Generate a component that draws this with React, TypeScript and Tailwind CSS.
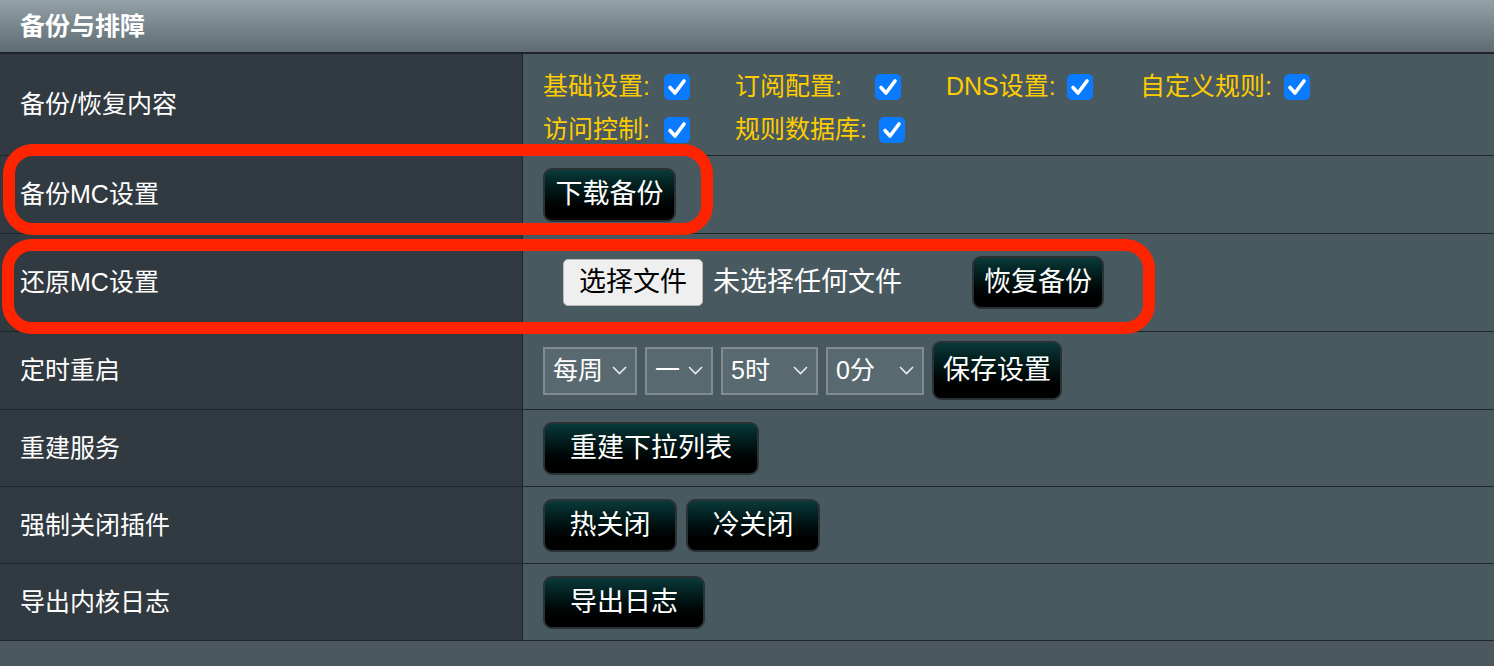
import type { ReactNode } from "react";

const FONT = "font-['Liberation_Sans','Noto_Sans_CJK_SC',sans-serif]";

function Row({ label, h, children, top }: { label: string; h: string; children: ReactNode; top?: boolean }) {
  return (
    <div className={`flex border-b border-[#1f2528] ${h}`}>
      <div className="w-[523px] shrink-0 flex items-center pl-5 bg-[#323a41] border-r border-[#1f2528] text-white text-[25px] leading-none">
        {label}
      </div>
      <div className={`flex-1 bg-[#48595f] pl-5 flex ${top ? "flex-col pt-[11px]" : "items-center"}`}>{children}</div>
    </div>
  );
}

function Btn({ children, w, h = "h-[53px]" }: { children: ReactNode; w: string; h?: string }) {
  return (
    <button className={`${w} ${h} shrink-0 rounded-[9px] border-2 border-[#2a3235] bg-linear-to-b from-[#0a3a3a] to-black text-white text-[27px] leading-none flex items-center justify-center`}>
      {children}
    </button>
  );
}

function Check() {
  return (
    <span className="w-[26px] h-[26px] shrink-0 rounded-[5px] bg-[#0a7bff] flex items-center justify-center">
      <svg width="20" height="18" viewBox="0 0 20 18" fill="none">
        <path d="M3 9.5 L8 15 L17 3" stroke="white" strokeWidth="3.6" strokeLinecap="round" strokeLinejoin="round" />
      </svg>
    </span>
  );
}

function Opt({ label, w, gap }: { label: string; w: string; gap: string }) {
  return (
    <div className={`flex items-center ${gap}`}>
      <span className={`${w} text-[#ffcc00] text-[25px] leading-none`}>{label}</span>
      <Check />
    </div>
  );
}

function Select({ value, w }: { value: string; w: string }) {
  return (
    <div className={`${w} h-[48px] shrink-0 border-2 border-[#808c91] bg-[#586970] flex items-center justify-between pl-[8px] pr-[8px] text-white text-[25px] leading-none`}>
      <span>{value}</span>
      <svg width="15" height="9" viewBox="0 0 15 9" fill="none">
        <path d="M1 1 L7.5 7.5 L14 1" stroke="#e8ecee" strokeWidth="1.6" />
      </svg>
    </div>
  );
}

export default function App() {
  return (
    <div className={`min-h-screen w-full bg-[#4b585e] ${FONT}`}>
      <div className="relative">
        <div className="h-[54px] border-b-2 border-[#1d2326] bg-linear-to-b from-[#94a1a7] to-[#5e6b72] flex items-center pl-5 text-white text-[25px] font-bold leading-none">
          备份与排障
        </div>

        <Row label="备份/恢复内容" h="h-[102px]" top>
          <div className="h-[43px] flex items-center">
            <Opt label="基础设置:" w="w-[121px]" gap="mr-[45px]" />
            <Opt label="订阅配置:" w="w-[140px]" gap="mr-[45px]" />
            <Opt label="DNS设置:" w="w-[121px]" gap="mr-[47px]" />
            <Opt label="自定义规则:" w="w-[144px]" gap="" />
          </div>
          <div className="h-[43px] flex items-center">
            <Opt label="访问控制:" w="w-[121px]" gap="mr-[45px]" />
            <Opt label="规则数据库:" w="w-[144px]" gap="" />
          </div>
        </Row>

        <Row label="备份MC设置" h="h-[78px]">
          <Btn w="w-[133px]" h="h-[54px]">下载备份</Btn>
        </Row>

        <Row label="还原MC设置" h="h-[98px]">
          <div className="ml-5 w-[140px] h-[47px] rounded-[5px] border border-[#b9b9b9] bg-[#efefef] text-black text-[27px] leading-none flex items-center justify-center">
            选择文件
          </div>
          <span className="ml-[10px] text-white text-[27px] leading-none">未选择任何文件</span>
          <div className="ml-[70px]">
            <Btn w="w-[132px]">恢复备份</Btn>
          </div>
        </Row>

        <Row label="定时重启" h="h-[78px]">
          <div className="flex items-center gap-2">
            <Select value="每周" w="w-[94px]" />
            <Select value="一" w="w-[68px]" />
            <Select value="5时" w="w-[97px]" />
            <Select value="0分" w="w-[98px]" />
            <Btn w="w-[130px]" h="h-[59px]">保存设置</Btn>
          </div>
        </Row>

        <Row label="重建服务" h="h-[77px]">
          <Btn w="w-[216px]">重建下拉列表</Btn>
        </Row>

        <Row label="强制关闭插件" h="h-[77px]">
          <div className="flex items-center gap-[9px]">
            <Btn w="w-[134px]">热关闭</Btn>
            <Btn w="w-[134px]">冷关闭</Btn>
          </div>
        </Row>

        <Row label="导出内核日志" h="h-[77px]">
          <Btn w="w-[162px]">导出日志</Btn>
        </Row>

        {/* highlight annotations */}
        <div className="absolute left-[3px] top-[144px] w-[710px] h-[91px] border-[12px] border-[#ff2400] rounded-[30px]" />
        <div className="absolute left-[2px] top-[239px] w-[1153px] h-[95px] border-[12px] border-[#ff2400] rounded-[30px]" />
      </div>
    </div>
  );
}
